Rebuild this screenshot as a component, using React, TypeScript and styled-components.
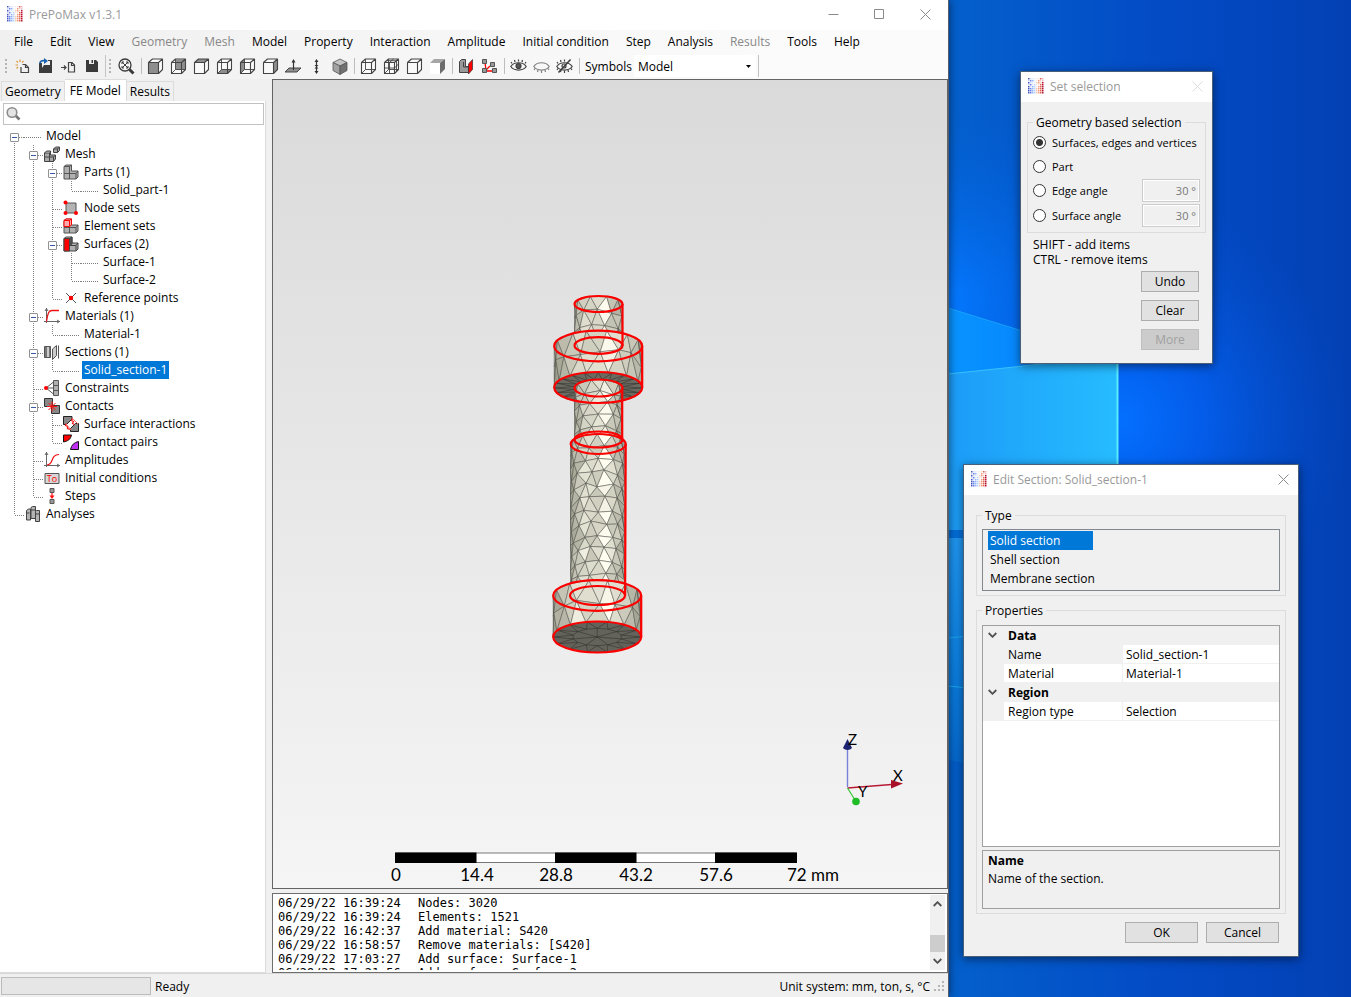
import React from 'react';
import styled, { createGlobalStyle, css } from 'styled-components';

const GlobalStyle = createGlobalStyle`
  *, *::before, *::after { box-sizing: border-box; }
  body { margin: 0; font: 12px/15px "Open Sans", "Noto Sans", sans-serif; color: #000; }
  button, input, select { font: inherit; color: inherit; margin: 0; padding: 0; border-radius: 0; }
`;

/* ---------- desktop and window frames ---------- */

const Desktop = styled.div`
  position: relative;
  min-height: 100vh;
  overflow: hidden;
  background: #0450c4;
`;

const Wallpaper = styled.svg`
  position: absolute;
  inset: 0 0 0 auto;
  width: 403px;
  height: 100%;
`;

const MainWindow = styled.main`
  position: relative;
  display: grid;
  grid-template-rows: 30px 24px 25px minmax(0, 1fr) 24px;
  width: calc(100% - 402px);
  height: 100vh;
  background: #f0f0f0;
  border-right: 1px solid #55606c;
  box-shadow: 1px 0 8px rgba(0, 0, 0, 0.45);
`;

const Dialog = styled.section<{ $top: number; $right: number; $width: number }>`
  position: absolute;
  top: ${(p) => p.$top}px;
  right: ${(p) => p.$right}px;
  width: ${(p) => p.$width}px;
  background: #f0f0f0;
  border: 1px solid #4a6078;
  box-shadow: 0 2px 9px rgba(0, 0, 0, 0.5);
`;

const TitleBar = styled.header`
  display: flex;
  align-items: center;
  gap: 6px;
  height: 30px;
  padding: 0 0 2px 7px;
  background: #fff;
  color: #999;
`;

const Title = styled.h1`
  flex: 1;
  margin: 0;
  font-size: 12px;
  font-weight: 400;
`;

const CaptionGroup = styled.div`
  display: flex;
`;

const CaptionButton = styled.button<{ $width: number }>`
  display: grid;
  place-items: center;
  width: ${(p) => p.$width}px;
  height: 28px;
  border: 0;
  background: none;
  color: #8a8a8a;
  &:disabled { color: #ddd; }
`;

/* ---------- menu and toolbar ---------- */

const MenuBar = styled.nav`
  display: flex;
  gap: 1px;
  padding: 0 0 1px 6px;
  background: linear-gradient(90deg, #f0f0f0, #fbfbfb 85%);
`;

const MenuItem = styled.button`
  padding: 0 8px;
  border: 0;
  background: none;
  white-space: nowrap;
  &:disabled { color: #888; }
`;

const Toolbar = styled.div`
  display: flex;
  align-items: center;
  padding: 0 0 1px 5px;
  background: linear-gradient(90deg, #f0f0f0, #fbfbfb 85%);
`;

const Grip = styled.span`
  width: 2px;
  height: 15px;
  margin-right: 4px;
  background: repeating-linear-gradient(#b4b4b4 0 2px, transparent 2px 4px);
`;

const StripEnd = styled.span`
  width: 1px;
  height: 22px;
  margin: 0 3px 0 2px;
  background: #c4c4c4;
`;

const Separator = styled.span`
  width: 1px;
  height: 16px;
  margin: 0 2px 0 3px;
  background: #bdbdbd;
`;

const ToolButton = styled.button`
  display: grid;
  place-items: center;
  width: 23px;
  height: 22px;
  border: 0;
  background: none;
`;

const SymbolLabel = styled.label`
  padding: 0 2px 0 3px;
`;

const SymbolSelect = styled.select`
  width: 122px;
  height: 22px;
  padding: 0 4px;
  border: 0;
  appearance: none;
  background: #fff url("data:image/svg+xml,%3Csvg xmlns='http://www.w3.org/2000/svg' width='5' height='3'%3E%3Cpath d='M0 0h5L2.5 3z'/%3E%3C/svg%3E") no-repeat right 5px center;
`;

/* ---------- work area ---------- */

const WorkArea = styled.div`
  display: grid;
  grid-template-columns: 266px minmax(0, 1fr);
  gap: 6px;
  min-height: 0;
`;

const SidePanel = styled.aside`
  display: flex;
  flex-direction: column;
`;

const Tabs = styled.div`
  display: flex;
  align-items: flex-end;
  height: 22px;
  padding-left: 1px;
`;

const Tab = styled.button<{ $active?: boolean }>`
  height: 20px;
  padding: 0 3px;
  white-space: nowrap;
  border: 1px solid #dcdcdc;
  border-bottom: 0;
  background: #f0f0f0;
  & + & { border-left: 0; }
  ${(p) => p.$active && css`
    height: 22px;
    padding: 0 5px 1px;
    background: #fff;
  `}
`;

const TabPage = styled.div`
  flex: 1;
  min-height: 0;
  padding: 2px 1px 0 3px;
  background: #fff;
  border-right: 1px solid #dcdcdc;
  border-bottom: 1px solid #dcdcdc;
`;

const SearchBox = styled.label`
  display: flex;
  align-items: center;
  gap: 4px;
  height: 22px;
  padding-left: 2px;
  border: 1px solid #c2c2c2;
`;

const SearchInput = styled.input`
  flex: 1;
  min-width: 0;
  border: 0;
  outline: 0;
  background: none;
`;

const TreeList = styled.ul`
  margin: 2px 0 0 2px;
  padding: 0;
  list-style: none;
`;

const TreeRow = styled.li`
  display: flex;
  height: 18px;
`;

const dotsV = 'repeating-linear-gradient(#808080 0 1px, transparent 1px 2px)';
const dotsH = 'repeating-linear-gradient(90deg, #808080 0 1px, transparent 1px 2px)';

const Guide = styled.span<{ $above?: boolean; $below?: boolean; $branch?: boolean }>`
  position: relative;
  display: grid;
  place-items: center;
  flex: none;
  width: 19px;
  &::before {
    content: "";
    position: absolute;
    left: 9px;
    width: 1px;
    top: ${(p) => (p.$above ? 0 : 10)}px;
    bottom: ${(p) => (p.$below ? 0 : 8)}px;
    background: ${dotsV};
  }
  &::after {
    content: "";
    display: ${(p) => (p.$branch ? 'block' : 'none')};
    position: absolute;
    left: 10px;
    right: 0;
    top: 10px;
    height: 1px;
    background: ${dotsH};
  }
`;

const HiddenGuide = styled.span`
  flex: none;
  width: 19px;
`;

const Expander = styled.button`
  position: relative;
  z-index: 1;
  display: grid;
  place-items: center;
  width: 9px;
  height: 9px;
  margin-top: 3px;
  border: 1px solid #919191;
  border-radius: 1px;
  background: #fff;
  &::before { content: ""; width: 5px; height: 1px; background: #3a58a8; }
`;

const IconSlot = styled.span<{ $empty?: boolean }>`
  flex: none;
  width: 17px;
  padding: 1px 0 0 1px;
  ${(p) => p.$empty && css`
    background: ${dotsH} 0 10px / 17px 1px no-repeat;
  `}
  svg { display: block; }
`;

const TreeLabel = styled.span<{ $selected?: boolean }>`
  margin-left: 3px;
  padding: 0 2px;
  line-height: 18px;
  white-space: nowrap;
  ${(p) => p.$selected && css`
    background: #0078d7;
    color: #fff;
  `}
`;

const RightPane = styled.div`
  display: grid;
  grid-template-rows: minmax(0, 1fr) 80px;
  gap: 4px;
  min-height: 0;
`;

const Viewport = styled.div`
  position: relative;
  overflow: hidden;
  border: 1px solid #646464;
  background: linear-gradient(#dadada, #f5f5f5);
`;

const ModelDrawing = styled.svg`
  position: absolute;
  top: 210px;
  left: calc(50% - 62px);
`;

const AxisDrawing = styled.svg`
  position: absolute;
  right: 38px;
  bottom: 76px;
`;

const ScaleDrawing = styled.svg`
  position: absolute;
  left: calc(50% - 222px);
  bottom: 0;
`;

const LogPane = styled.div`
  display: flex;
  gap: 2px;
  padding: 1px 2px 2px 5px;
  background: #fff;
  border: 1px solid #6e6e6e;
  overflow: hidden;
`;

const LogLines = styled.div`
  flex: 1;
  padding-top: 1px;
  overflow: hidden;
  font: 12px/14px "DejaVu Sans Mono", monospace;
`;

const LogLine = styled.div`
  display: grid;
  grid-template-columns: 140px 1fr;
  white-space: pre;
`;

const ScrollBar = styled.div`
  display: flex;
  flex-direction: column;
  align-items: center;
  justify-content: space-between;
  width: 15px;
  padding: 6px 0;
  background: #f0f0f0;
`;

const ScrollThumb = styled.span`
  width: 15px;
  height: 17px;
  margin-top: 22px;
  background: #cdcdcd;
`;

const StatusBar = styled.footer`
  display: flex;
  align-items: center;
  gap: 4px;
  padding: 1px 3px 0 1px;
  border-top: 1px solid #d7d7d7;
`;

const ProgressTrack = styled.div`
  width: 150px;
  height: 18px;
  border: 1px solid #bcbcbc;
  background: #e6e6e6;
`;

const StatusText = styled.span<{ $grow?: boolean }>`
  flex: ${(p) => (p.$grow ? 1 : 'none')};
  white-space: nowrap;
`;

/* ---------- dialogs ---------- */

const GroupBox = styled.fieldset`
  margin: 0;
  padding: 0 5px 4px;
  min-width: 0;
  border: 1px solid #dcdcdc;
  legend { padding: 0 3px; }
`;

const SelectionBody = styled.div`
  padding: 13px 6px 13px;
`;

const RadioGrid = styled.div`
  display: grid;
  grid-template-columns: 1fr 58px;
  grid-template-rows: 24px 24px 25px 25px;
  align-items: center;
  font-size: 11px;
`;

const RadioLabel = styled.label<{ $wide?: boolean }>`
  display: flex;
  align-items: center;
  gap: 6px;
  white-space: nowrap;
  ${(p) => p.$wide && css`grid-column: 1 / -1;`}
`;

const Radio = styled.input`
  flex: none;
  appearance: none;
  width: 13px;
  height: 13px;
  border: 1px solid #333;
  border-radius: 50%;
  background: #fff;
  &:checked { background: radial-gradient(#333 0 3px, #fff 4px); }
`;

const AngleInput = styled.input`
  width: 58px;
  height: 23px;
  padding: 0 3px 1px 0;
  border: 1px solid #ccc;
  box-shadow: inset 0 0 0 1px #fff;
  background: #f0f0f0;
  text-align: right;
  &:disabled { color: #777; }
`;

const Hint = styled.p`
  margin: 4px 0 4px 6px;
`;

const ButtonStack = styled.div`
  display: flex;
  flex-direction: column;
  align-items: flex-end;
  gap: 8px;
  padding-right: 7px;
`;

const PushButton = styled.button<{ $width: number }>`
  width: ${(p) => p.$width}px;
  height: 21px;
  border: 1px solid #adadad;
  background: #e1e1e1;
  &:disabled {
    border-color: #bfbfbf;
    background: #ccc;
    color: #a0a0a0;
  }
`;

const EditBody = styled.div`
  display: grid;
  gap: 7px;
  padding: 13px 12px;
`;

const TypeList = styled.ul`
  height: 62px;
  margin: 6px 0 0;
  padding: 1px 5px;
  border: 1px solid #828790;
  list-style: none;
`;

const TypeOption = styled.li<{ $selected?: boolean }>`
  width: 105px;
  padding: 0 2px;
  line-height: 19px;
  white-space: nowrap;
  ${(p) => p.$selected && css`
    background: #0078d7;
    color: #fff;
  `}
`;

const PropertyBox = styled.div`
  height: 222px;
  margin-top: 7px;
  border: 1px solid #a0a0a0;
  background: #fff;
`;

const PropertyTable = styled.table`
  width: 100%;
  border-spacing: 0;
  table-layout: fixed;
  td, th {
    height: 19px;
    padding: 0 4px;
    border-bottom: 1px solid #f0f0f0;
    font-weight: 400;
    line-height: 15px;
    text-align: left;
  }
  td:first-child { padding: 0 0 0 5px; background: #f0f0f0; }
  td:first-child svg { display: block; }
  td:last-child { padding-left: 3px; border-left: 1px solid #f0f0f0; }
`;

const GutterColumn = styled.col`
  width: 21px;
`;

const NameColumn = styled.col`
  width: 118px;
`;

const CategoryRow = styled.tr`
  background: #f0f0f0;
  && th { font-weight: 700; }
`;

const PropertyName = styled.th<{ $current?: boolean }>`
  background: ${(p) => (p.$current ? '#f0f0f0' : '#fff')};
`;

const PropertyInput = styled.input`
  display: block;
  width: 100%;
  height: 16px;
  border: 0;
  background: none;
`;

const Description = styled.div`
  height: 59px;
  margin-top: 3px;
  padding: 1px 5px;
  border: 1px solid #a0a0a0;
  line-height: 18px;
  p { margin: 0; }
`;

const ButtonRow = styled.div`
  display: flex;
  justify-content: flex-end;
  gap: 8px;
  padding: 1px 7px 0 0;
`;

/* ---------- drawings ---------- */

const dotColors = ['#3b4cc0', '#5d7ce6', '#8cb0fe', '#b8d0f9', '#f3c7b1', '#f39475', '#dc5e4b', '#b40426'];
const dotRows = ['10000010', '01100100', '10001101', '01010011', '10110111', '11111111', '11111111', '11111111'];

const AppIcon = () => (
  <svg width="16" height="16" viewBox="0 0 16 16" aria-hidden="true">
    {dotRows.flatMap((row, y) =>
      row.split('').map((on, x) => (
        <rect key={`${x}-${y}`} x={x * 2} y={y * 2} width="1.5" height="1.5"
          fill={dotColors[x]} opacity={on === '1' ? 0.95 : 0.28} />
      )),
    )}
  </svg>
);

const CloseGlyph = () => (
  <svg width="11" height="11" viewBox="0 0 11 11"><path d="M.5.5l10 10M10.5.5l-10 10" stroke="currentColor" fill="none" /></svg>
);

const faces: Record<string, string> = {
  front: 'M1.5 4.5h10v11h-10z',
  back: 'M5.5 1.5h10v10h-10z',
  top: 'M1.5 4.5l4-3.5h10l-4 3.5z',
  bottom: 'M1.5 15.5l4-4h10l-4 4z',
  left: 'M1.5 4.5l4-3.5v10.5l-4 4z',
  right: 'M11.5 4.5l4-3.5v10.5l-4 4z',
};

const CubeIcon = ({ face, wire, grid }: { face?: string; wire?: boolean; grid?: boolean }) => (
  <svg width="17" height="17" viewBox="0 0 17 17" fill="none" stroke="#444" strokeWidth="1.1" strokeLinejoin="round">
    <path d="M1.5 4.5l4-3.5h10v10.5l-4 4h-10z" fill="#fafafa" stroke="none" />
    {face && <path d={faces[face]} fill="#8e8e8e" stroke="none" />}
    {(wire || face === 'back' || face === 'bottom' || face === 'left') && <path d="M5.5 1v10.5h10M5.5 11.5l-4 4" strokeWidth="0.9" />}
    <path d="M1.5 4.5h10v11h-10zM1.5 4.5l4-3.5h10l-4 3.5M15.5 1v10.5l-4 4" />
    {grid && <path d="M6.5 4.5v11M1.5 10h10M10.5 1l-4 3.5M11.5 10l4-4M3.5 2.7h10v10.5" strokeWidth="0.9" />}
  </svg>
);

const NewIcon = () => (
  <svg width="16" height="16" viewBox="0 0 16 16" fill="none" stroke="#444" strokeWidth="1.2">
    <path d="M7.5 6.5h3l3 3v5H6V9" />
    <path d="M10.5 6.5v3h3" />
    <path d="M5 1.5v2.5M1.5 3l1.5 1.5M.5 7h2.5M8.5 3L7 4.5M1.5 10.5L3 9" stroke="#dc9a3c" />
  </svg>
);
const OpenIcon = () => (
  <svg width="16" height="16" viewBox="0 0 16 16">
    <path d="M1 5v10h12l1-8h-1V2h-3v1h2v4H6L4 10V5z" fill="#3c3c3c" />
    <path d="M14 2v13h-2V2z" fill="#3c3c3c" />
    <path d="M2 5.5C2 3 4 2.3 7 2.8" fill="none" stroke="#1b63ad" strokeWidth="1.8" />
    <path d="M6 0l4 3-4 3z" fill="#1b63ad" />
  </svg>
);
const ImportIcon = () => (
  <svg width="16" height="16" viewBox="0 0 16 16" fill="none" stroke="#444" strokeWidth="1.2">
    <path d="M7.5 4.5h3.5l2.5 2.5v7h-6zM10.5 4.5v3h3" />
    <path d="M0 9.5h4.5M3 7.5l2 2-2 2" />
  </svg>
);
const SaveIcon = () => (
  <svg width="16" height="16" viewBox="0 0 16 16">
    <path d="M2 2h10l2 2v10H2z" fill="#3a3a3a" />
    <path d="M5 2h5v4H5z" fill="#eee" /><path d="M7.5 2h1.5v3h-1.5z" fill="#3a3a3a" />
  </svg>
);
const ZoomIcon = () => (
  <svg width="17" height="17" viewBox="0 0 17 17" fill="none" stroke="#3a3a3a">
    <circle cx="7" cy="7" r="6" strokeWidth="1.3" fill="#f6f6f6" />
    <path d="M11.5 11.5l4 4" strokeWidth="3" />
    <path d="M4 6V4h2M8 4h2v2M10 8v2H8M6 10H4V8M4 4l6 6M10 4l-6 6" strokeWidth="1" />
  </svg>
);
const NormalIcon = () => (
  <svg width="17" height="17" viewBox="0 0 17 17">
    <path d="M4 10h12l-4 4H0z" fill="#8e8e8e" stroke="#444" />
    <path d="M8.5 12V3" stroke="#333" strokeWidth="1.2" /><path d="M8.5 1l2 3.5h-4z" fill="#333" />
  </svg>
);
const VerticalIcon = () => (
  <svg width="9" height="17" viewBox="0 0 9 17">
    <path d="M4.5 3v11" stroke="#333" strokeWidth="1.2" />
    <path d="M4.5 1l2 3h-4zM4.5 16l2-3h-4zM2.5 7h4l-2 2zM2.5 10.5h4l-2-2z" fill="#333" />
  </svg>
);
const IsoIcon = () => (
  <svg width="16" height="17" viewBox="0 0 16 17" stroke="#555" strokeWidth="0.8">
    <path d="M8 1l7 3.5L8 8 1 4.5z" fill="#c4c4c4" />
    <path d="M1 4.5L8 8v8.5L1 12.5z" fill="#a2a2a2" />
    <path d="M15 4.5L8 8v8.5l7-4z" fill="#717171" />
  </svg>
);
const ShadedIcon = () => (
  <svg width="17" height="17" viewBox="0 0 17 17">
    <path d="M1 5h10v11H1z" fill="#fff" /><path d="M1 5l4-4h11l-5 4z" fill="#a6a6a6" /><path d="M11 5l5-4v10l-5 5z" fill="#6d6d6d" />
  </svg>
);
const SectionCutIcon = () => (
  <svg width="17" height="17" viewBox="0 0 17 17" stroke="#444">
    <path d="M1.5 3.5l2-2h4v7h3v6h-9z" fill="#999" /><path d="M5.5 4v5h5l2-2" fill="none" />
    <path d="M10.5 6l4-4.5v10l-4 4.5z" fill="#f00" stroke="#333" strokeWidth="0.7" />
  </svg>
);
const AnnotateIcon = () => (
  <svg width="17" height="17" viewBox="0 0 17 17">
    <path d="M4 4l1 9h7M5 12l4-4" fill="none" stroke="#f00" strokeWidth="1.3" />
    <path d="M1.5 1.5h4v4h-4zM9.5 4.5h4v4h-4zM1.5 10.5h4v4h-4zM11.5 10.5h4v4h-4z" fill="#999" stroke="#555" />
  </svg>
);
const EyeIcon = ({ state }: { state: 'open' | 'closed' | 'toggle' }) => {
  const color = state === 'closed' ? '#808080' : '#404040';
  return (
    <svg width="17" height="16" viewBox="0 0 17 16" fill="none" stroke={color} strokeWidth="1.2">
      <path d="M.8 8.5C4 3.5 13 3.5 16.2 8.5 13 13.2 4 13.2.8 8.5z" />
      {state === 'open' && <><path d="M2 5.5l-1-1.5M5 4L4.5 2M8.5 3.5V1.5M12 4l.5-2M15 5.5l1-1.5" /><circle cx="8.5" cy="8" r="2.5" fill="#555" /></>}
      {state !== 'open' && <path d="M2 10.5L1 12M5 12l-.5 2M8.5 12.5V15M12 12l.5 2M15 10.5l1 1.5" />}
      {state === 'toggle' && <><path d="M2 5.5l-1-1.5M5 4L4.5 2M8.5 3.5V1.5" /><circle cx="8" cy="8" r="2" /><path d="M2.5 14.5l12-13" strokeWidth="1.6" /></>}
    </svg>
  );
};

const SearchGlyph = () => (
  <svg width="16" height="16" viewBox="0 0 16 16" fill="none">
    <path d="M9 9l4.5 4.5" stroke="#777" strokeWidth="2.6" />
    <circle cx="6" cy="6.5" r="4.8" fill="#e4e4e4" stroke="#8c8c8c" strokeWidth="1.6" />
  </svg>
);

const partShape = 'M1 2.5l2-1.5h5.5v6h6.5v6l-2 2H1z';

const TreeIcon = ({ name }: { name: string }) => {
  const art: Record<string, React.ReactNode> = {
    mesh: <g stroke="#444" fill="#aaa"><path d="M.5 7l2-2h4v4h5v4l-2 2.5h-9zM.5 11h9v4.5M5.5 7v8.5M.5 7h5l1.5-2M9.5 11l2-2" /><path d="M9.5 3l2-2h4v3.5l-2 2h-4zM9.5 3h4v3.5M13.5 3l2-2" /></g>,
    part: <g stroke="#555" fill="#b0b0b0"><path d={partShape} /><path d="M1 9.5h12V15M6.5 2.5V15M1 2.5h5.5l2-1.5M13 9.5l2-2.5" fill="none" /></g>,
    node: <g><path d="M3 3h10v10H3z" fill="#b4b4b4" stroke="#555" /><g fill="#f00"><circle cx="2.5" cy="2.5" r="2" /><circle cx="2.5" cy="13" r="2" /><circle cx="13" cy="13" r="2" /></g></g>,
    element: <g stroke="#555" fill="#b0b0b0"><path d={partShape} /><path d="M6.5 9V15M1 9.5h12V15M13 9.5l2-2.5" fill="none" /><path d="M1 2.5l2-1.5h5.5v6l-2 1.5H1zM1 2.5h5.5v6M6.5 2.5l2-1.5" fill="#faa" stroke="#f00" /></g>,
    surface: <g stroke="#444" fill="#b0b0b0"><path d="M1 2.5l2-1.5h6v6h6v6l-2 2H1z" /><path d="M7 9.5h6V15M13 9.5l2-2.5" fill="none" /><path d="M6.5 2.5l2.5-1.5v7l-2.5 1.5z" fill="#555" /><path d="M1 2.5h5.5v12.5H1z" fill="#f00" /></g>,
    point: <g><path d="M3 3l10 10M13 3L3 13" stroke="#555" /><circle cx="8" cy="8" r="2.2" fill="#f00" /></g>,
    material: <g fill="none"><path d="M2.5 0v15M0 13.5h16M1 3l1.5-2.5L4 3M13 12l2.5 1.5L13 15" stroke="#666" /><path d="M2.5 13.5C4 4 5 2.5 8 2.5h7" stroke="#e11" strokeWidth="1.3" /></g>,
    section: <g stroke="#555"><path d="M.5 2.5h6v11h-6z" fill="#777" /><path d="M3 3h2v10H3z" fill="#ccc" stroke="none" /><path d="M8.5 5l4-3.5v10l-4 4z" fill="#ccc" /><path d="M14.5 1.5v13" /></g>,
    constraint: <g stroke="#555"><path d="M9.5.5h5v15h-5zM9.5 5.5h5M9.5 10.5h5" fill="#b0b0b0" /><path d="M2 8h7.5M2 8l7.5-6M2 8l7.5 6" fill="none" /><circle cx="2" cy="8" r="2" fill="#f00" stroke="none" /></g>,
    contact: <g><path d="M.5.5h8v8h-8z" fill="#888" stroke="#333" /><path d="M7.5 7.5h8v8h-8z" fill="#888" stroke="#333" /><path d="M8 3.5v10M3 8.5h10M4.5 5l7 7M11.5 5l-7 7" stroke="#f11" strokeWidth="1" /></g>,
    interaction: <g><path d="M.5.5H9v2.500L3.500 8.500h-3zM15.500 15.500H7.500v-3l5-5h3z" fill="#888" stroke="#222" /><path d="M9.5 2.5l-1 2 2 1-1 2 2 1M3.5 7.5l-1 2 2 1v2l3 1" fill="none" stroke="#f11" strokeWidth="1.2" /><path d="M9.5 2.5l5.5 5.5M3 8l5 6" stroke="#f66" /></g>,
    pair: <g stroke="#111"><path d="M.5 1h8c-1 4.5-3.5 6-8 7z" fill="#f00" /><path d="M15.5 7.5v8h-8c1-4.5 3.5-7 8-8z" fill="#c030f0" /></g>,
    amplitude: <g fill="none"><path d="M2.5 0v15M0 13.5h16M1 3l1.5-2.5L4 3M13 12l2.5 1.5L13 15" stroke="#666" /><path d="M3 13c7 0 3-10.5 12-10.5" stroke="#e11" strokeWidth="1.2" /></g>,
    initial: <g><path d="M1 3.5h14v10H1z" fill="#d6d6d6" stroke="#555" /><text x="8" y="12" fill="#f00" fontSize="9" textAnchor="middle">To</text></g>,
    step: <g><path d="M6 .5h4v4H6zM6 11.5h4v4H6z" fill="#999" stroke="#555" /><path d="M8 5v5" stroke="#f11" strokeWidth="1.2" /><path d="M5.5 7.5h5L8 11z" fill="#f11" /></g>,
    analysis: <g stroke="#444" fill="#b4b4b4"><path d="M1.5 4.5l2-1.5h2v11h-4z" /><path d="M6 1.5l1.5-1h3v12H6z" /><path d="M10.5 5.5l1-1h3v11h-4zM6 4h4M1.5 7h3M10.5 8h4" /></g>,
  };
  return <svg width="16" height="16" viewBox="0 0 16 16">{art[name]}</svg>;
};

/* Pseudo-random sequence, so that the mesh is the same on every render. */
const makeRandom = (seed: number) => () => {
  seed = (seed * 16807) % 2147483647;
  return seed / 2147483647;
};

const tone = (v: number) => {
  const k = Math.max(0, Math.min(1, v));
  return `rgb(${Math.round(145 + 110 * k)},${Math.round(145 + 109 * k)},${Math.round(128 + 112 * k)})`;
};

type Barrel = { cx: number; rx: number; ry: number; y0: number; y1: number; cols: number; rows: number; seed: number };

/* Front half of a cylinder that is seen from below, as shaded triangles. */
const BarrelMesh = ({ cx, rx, ry, y0, y1, cols, rows, seed }: Barrel) => {
  const rnd = makeRandom(seed);
  const step = (y1 - y0) / rows;
  const lines = Array.from({ length: rows + 1 }, (_, j) => {
    const stops = j % 2 ? [0, ...Array.from({ length: cols }, (_, i) => i + 0.5), cols] : Array.from({ length: cols + 1 }, (_, i) => i);
    return stops.map((s, i) => {
      const inner = i > 0 && i < stops.length - 1;
      const t = (Math.PI * (s + (inner ? (rnd() - 0.5) * 0.3 : 0))) / cols;
      const dy = inner && j > 0 && j < rows ? (rnd() - 0.5) * step * 0.4 : 0;
      return { t, x: cx - rx * Math.cos(t), y: y0 + j * step + dy - ry * Math.sin(t) };
    });
  });
  const triangles: React.ReactNode[] = [];
  for (let j = 0; j < rows; j++) {
    const a = lines[j];
    const b = lines[j + 1];
    let p = 0;
    let q = 0;
    while (p < a.length - 1 || q < b.length - 1) {
      const useA = q >= b.length - 1 || (p < a.length - 1 && a[p + 1].t < b[q + 1].t);
      const tri = useA ? [a[p], a[p + 1], b[q]] : [a[p], b[q + 1], b[q]];
      const t = (tri[0].t + tri[1].t + tri[2].t) / 3;
      const glint = Math.exp(-Math.pow((t - 1.85) / 0.22, 2)) * 0.45 + Math.exp(-Math.pow((t - 1.1) / 0.18, 2)) * 0.25;
      const v = 0.1 + 0.48 * Math.sin(t) + glint + (rnd() - 0.5) * 0.26;
      triangles.push(<polygon key={`${j}-${p}-${q}`} points={tri.map((c) => `${c.x.toFixed(1)},${c.y.toFixed(1)}`).join(' ')} fill={tone(v)} />);
      if (useA) p++;
      else q++;
    }
  }
  return <g stroke="#4c4c46" strokeWidth="0.5" strokeLinejoin="round">{triangles}</g>;
};

/* Flat underside of a disc, with spokes joining its rings. */
const DiscMesh = ({ cx, cy, rx, ry, spokes }: { cx: number; cy: number; rx: number; ry: number; spokes?: boolean }) => {
  const n = spokes ? 20 : 14;
  const at = (i: number, r: number) => `${(cx + rx * r * Math.cos((i * 2 * Math.PI) / n)).toFixed(1)} ${(cy + ry * r * Math.sin((i * 2 * Math.PI) / n)).toFixed(1)}`;
  const idx = Array.from({ length: n }, (_, i) => i);
  return (
    <g stroke="#32322e" strokeWidth="0.6" fill="none">
      <ellipse cx={cx} cy={cy} rx={rx} ry={ry} fill={spokes ? '#6c6b62' : '#64635b'} />
      <path d={idx.map((i) => `M${at(i, 1)}L${at(i + 0.5, 0.56)}L${at(i + 1, 1)}`).join('')} />
      {!spokes && <path d={idx.map((i) => `M${at(i + 0.5, 0.56)}L${at(i + 1.5, 0.56)}`).join('')} />}
      {!spokes && <path d={idx.filter((i) => i % 2 === 0).map((i) => `M${at(i + 0.5, 0.56)}L${cx} ${cy}`).join('')} />}
    </g>
  );
};

const BoltModel = () => (
  <ModelDrawing width="100" height="370" viewBox="548 290 100 370" role="img" aria-label="Meshed bolt">
    <ellipse cx="598.5" cy="304" rx="24" ry="8" fill="#d0cfba" />
    <BarrelMesh cx={598.5} rx={24} ry={8} y0={304} y1={346} cols={5} rows={3} seed={71} />
    <BarrelMesh cx={598.2} rx={44} ry={15.5} y0={346} y1={388} cols={7} rows={2} seed={912} />
    <DiscMesh cx={598.2} cy={388} rx={44} ry={15.5} spokes />
    <BarrelMesh cx={598.5} rx={24} ry={8.5} y0={388} y1={446} cols={5} rows={5} seed={331} />
    <BarrelMesh cx={598} rx={27.5} ry={10} y0={444} y1={596} cols={6} rows={12} seed={4471} />
    <BarrelMesh cx={597.2} rx={44} ry={15.3} y0={595.5} y1={637} cols={7} rows={2} seed={8123} />
    <DiscMesh cx={597.2} cy={637} rx={44} ry={15.5} />
    <g fill="none" stroke="#fc0000" strokeWidth="2.2">
      <ellipse cx="598.5" cy="304" rx="24" ry="8" />
      <ellipse cx="598.5" cy="345.5" rx="24" ry="8.3" />
      <ellipse cx="598.2" cy="346" rx="44" ry="15.3" />
      <ellipse cx="598.2" cy="387.5" rx="44" ry="15.5" />
      <ellipse cx="598.5" cy="388" rx="24" ry="8.5" />
      <ellipse cx="598.5" cy="439.5" rx="24" ry="8" />
      <ellipse cx="598.2" cy="444" rx="27.5" ry="10" />
      <ellipse cx="597.5" cy="595.5" rx="27.5" ry="9.5" />
      <ellipse cx="597.2" cy="595.5" rx="44" ry="15.3" />
      <ellipse cx="597.2" cy="637" rx="44" ry="15.5" />
      <path d="M622.5 304v42M642.2 346v42M622.2 388v52M625.7 444l-.6 152M641.2 595.5V637" />
    </g>
  </ModelDrawing>
);

const Axes = () => (
  <AxisDrawing width="68" height="80" viewBox="841 732 68 80" fontFamily="Lato, sans-serif" fontSize="15">
    <path d="M847.5 787V747" stroke="#7880d8" strokeWidth="1.4" />
    <path d="M847.5 739l4.5 9c-2 2.5-7 2.5-9 0z" fill="#1c2370" />
    <path d="M847.5 788l44-3.5" stroke="#b81a34" strokeWidth="1.3" />
    <path d="M891 780l12 3.5-12 5z" fill="#a80f28" />
    <path d="M847.5 788l7.5 12" stroke="#38c838" strokeWidth="1.3" />
    <circle cx="856" cy="801.5" r="3.8" fill="#1fbd25" />
    <text x="848" y="745">Z</text><text x="893" y="781">X</text><text x="858" y="797">Y</text>
  </AxisDrawing>
);

const ScaleBar = () => (
  <ScaleDrawing width="460" height="40" viewBox="388 848 460 40" fontFamily="Lato, sans-serif" fontSize="17">
    <path d="M395.5 853h401v9.5h-401z" fill="#fff" stroke="#777" />
    <path d="M395 852.5h81.5v10.5H395zM555 852.5h81.5v10.5H555zM715 852.5h82v10.5h-82z" />
    {([['0', 396], ['14.4', 477], ['28.8', 556], ['43.2', 636], ['57.6', 716], ['72 mm', 813]] as [string, number][]).map(([label, x]) => (
      <text key={label} x={x} y="881" textAnchor="middle">{label}</text>
    ))}
  </ScaleDrawing>
);

const DesktopArt = () => (
  <Wallpaper viewBox="948 0 403 997" preserveAspectRatio="none" aria-hidden="true">
    <defs>
      <linearGradient id="base" x1="0" x2="1"><stop offset="0" stopColor="#0460cc" /><stop offset="0.5" stopColor="#034cc6" /><stop offset="1" stopColor="#0340b4" /></linearGradient>
      <radialGradient id="glow" gradientUnits="userSpaceOnUse" cx="1120" cy="420" r="230"><stop offset="0" stopColor="#0470ff" /><stop offset="0.35" stopColor="#0462f4" stopOpacity="0.8" /><stop offset="1" stopColor="#0450d0" stopOpacity="0" /></radialGradient>
      <radialGradient id="left" gradientUnits="userSpaceOnUse" cx="948" cy="300" r="190"><stop offset="0" stopColor="#0478ff" /><stop offset="1" stopColor="#0460e0" stopOpacity="0" /></radialGradient>
      <linearGradient id="beam" x1="0" x2="1"><stop offset="0" stopColor="#0894ff" /><stop offset="1" stopColor="#0478fc" /></linearGradient>
      <linearGradient id="pane" x1="0" x2="1"><stop offset="0" stopColor="#1c9cf8" /><stop offset="1" stopColor="#26bcff" /></linearGradient>
      <linearGradient id="lower" x1="0" x2="0" y1="0" y2="1"><stop offset="0" stopColor="#2098f4" /><stop offset="0.5" stopColor="#0d82e4" /><stop offset="1" stopColor="#0464cc" /></linearGradient>
    </defs>
    <path d="M948 0h403v997H948z" fill="url(#base)" />
    <path d="M948 0h403v997H948z" fill="url(#glow)" />
    <path d="M948 0h403v997H948z" fill="url(#left)" />
    <path d="M948 308l170 54v14H948z" fill="url(#beam)" />
    <path d="M948 308l100 31" stroke="#18a4ff" />
    <path d="M948 374l170-18v174H948z" fill="url(#pane)" />
    <path d="M948 374l170-18" stroke="#3cc0fc" fill="none" />
    <path d="M1117.5 356v174" stroke="#58ecff" strokeWidth="2" />
    <path d="M948 530h170v8H948z" fill="#0470dc" />
    <path d="M948 538h170v250l-170-28z" fill="url(#lower)" />
    <path d="M948 638l30-3M948 686l30 3" stroke="#1cacf4" />
  </Wallpaper>
);

const Chevron = ({ up }: { up?: boolean }) => (
  <svg width="9" height="6" viewBox="0 0 9 6"><path d={up ? 'M.7 5l3.8-3.8L8.3 5' : 'M.7 1l3.8 3.8L8.3 1'} fill="none" stroke="#505050" strokeWidth="1.8" /></svg>
);

/* ---------- content ---------- */

type Node = { label: string; icon?: string; selected?: boolean; children?: Node[] };

const tree: Node[] = [
  {
    label: 'Model',
    children: [
      {
        label: 'Mesh', icon: 'mesh', children: [
          { label: 'Parts (1)', icon: 'part', children: [{ label: 'Solid_part-1' }] },
          { label: 'Node sets', icon: 'node' },
          { label: 'Element sets', icon: 'element' },
          { label: 'Surfaces (2)', icon: 'surface', children: [{ label: 'Surface-1' }, { label: 'Surface-2' }] },
          { label: 'Reference points', icon: 'point' },
        ],
      },
      { label: 'Materials (1)', icon: 'material', children: [{ label: 'Material-1' }] },
      { label: 'Sections (1)', icon: 'section', children: [{ label: 'Solid_section-1', selected: true }] },
      { label: 'Constraints', icon: 'constraint' },
      { label: 'Contacts', icon: 'contact', children: [{ label: 'Surface interactions', icon: 'interaction' }, { label: 'Contact pairs', icon: 'pair' }] },
      { label: 'Amplitudes', icon: 'amplitude' },
      { label: 'Initial conditions', icon: 'initial' },
      { label: 'Steps', icon: 'step' },
    ],
  },
  { label: 'Analyses', icon: 'analysis' },
];

const renderNodes = (nodes: Node[], guides: boolean[] = []): React.ReactNode[] =>
  nodes.flatMap((node, i) => {
    const more = i < nodes.length - 1;
    return [
      <TreeRow key={`${guides.length}-${node.label}`} role="treeitem" aria-selected={!!node.selected}>
        {guides.map((g, k) => (g ? <Guide key={k} $above $below /> : <HiddenGuide key={k} />))}
        <Guide $above={guides.length > 0 || i > 0} $below={more} $branch>
          {node.children && <Expander aria-label={`Collapse ${node.label}`} />}
        </Guide>
        <IconSlot $empty={!node.icon}>{node.icon && <TreeIcon name={node.icon} />}</IconSlot>
        <TreeLabel $selected={node.selected}>{node.label}</TreeLabel>
      </TreeRow>,
      ...(node.children ? renderNodes(node.children, [...guides, more]) : []),
    ];
  });

const menu = ['File', 'Edit', 'View', 'Geometry', 'Mesh', 'Model', 'Property', 'Interaction', 'Amplitude', 'Initial condition', 'Step', 'Analysis', 'Results', 'Tools', 'Help'];
const disabledMenu = ['Geometry', 'Mesh', 'Results'];

const tools: [string, React.ReactNode][][] = [
  [['Zoom to fit', <ZoomIcon />]],
  [
    ['Front view', <CubeIcon face="front" />], ['Back view', <CubeIcon face="back" />], ['Top view', <CubeIcon face="top" />],
    ['Bottom view', <CubeIcon face="bottom" />], ['Left view', <CubeIcon face="left" />], ['Right view', <CubeIcon face="right" />],
    ['Normal view', <NormalIcon />], ['Vertical view', <VerticalIcon />], ['Isometric view', <IsoIcon />],
  ],
  [['Wireframe', <CubeIcon wire />], ['Element edges', <CubeIcon wire grid />], ['Model edges', <CubeIcon />], ['No edges', <ShadedIcon />]],
  [['Section view', <SectionCutIcon />], ['Exploded view', <AnnotateIcon />]],
  [['Show all', <EyeIcon state="open" />], ['Hide all', <EyeIcon state="closed" />], ['Invert visibility', <EyeIcon state="toggle" />]],
];

const log = [
  ['06/29/22 16:39:24', 'Nodes: 3020'],
  ['06/29/22 16:39:24', 'Elements: 1521'],
  ['06/29/22 16:42:37', 'Add material: S420'],
  ['06/29/22 16:58:57', 'Remove materials: [S420]'],
  ['06/29/22 17:03:27', 'Add surface: Surface-1'],
  ['06/29/22 17:21:56', 'Add surface: Surface-2'],
];

export default function App() {
  return (
    <Desktop>
      <GlobalStyle />
      <DesktopArt />

      <MainWindow>
        <TitleBar>
          <AppIcon />
          <Title>PrePoMax v1.3.1</Title>
          <CaptionGroup>
            <CaptionButton $width={46} aria-label="Minimize"><svg width="11" height="11"><path d="M.5 5.5h10" stroke="currentColor" /></svg></CaptionButton>
            <CaptionButton $width={46} aria-label="Maximize"><svg width="11" height="11"><path d="M.5.5h9v9h-9z" fill="none" stroke="currentColor" /></svg></CaptionButton>
            <CaptionButton $width={46} aria-label="Close"><CloseGlyph /></CaptionButton>
          </CaptionGroup>
        </TitleBar>

        <MenuBar>
          {menu.map((m) => <MenuItem key={m} disabled={disabledMenu.includes(m)}>{m}</MenuItem>)}
        </MenuBar>

        <Toolbar>
          <Grip />
          <ToolButton aria-label="New"><NewIcon /></ToolButton>
          <ToolButton aria-label="Open"><OpenIcon /></ToolButton>
          <ToolButton aria-label="Import"><ImportIcon /></ToolButton>
          <ToolButton aria-label="Save"><SaveIcon /></ToolButton>
          <StripEnd />
          <Grip />
          {tools.map((group, i) => (
            <React.Fragment key={i}>
              {group.map(([name, icon]) => <ToolButton key={name} aria-label={name}>{icon}</ToolButton>)}
              <Separator />
            </React.Fragment>
          ))}
          <SymbolLabel htmlFor="symbols">Symbols</SymbolLabel>
          <SymbolSelect id="symbols" defaultValue="Model"><option>Model</option></SymbolSelect>
          <StripEnd />
        </Toolbar>

        <WorkArea>
          <SidePanel>
            <Tabs role="tablist">
              <Tab role="tab">Geometry</Tab>
              <Tab role="tab" $active aria-selected>FE Model</Tab>
              <Tab role="tab">Results</Tab>
            </Tabs>
            <TabPage>
              <SearchBox><SearchGlyph /><SearchInput type="text" aria-label="Search" /></SearchBox>
              <TreeList role="tree">{renderNodes(tree)}</TreeList>
            </TabPage>
          </SidePanel>

          <RightPane>
            <Viewport>
              <BoltModel />
              <Axes />
              <ScaleBar />
            </Viewport>
            <LogPane>
              <LogLines role="log">
                {log.map(([time, text], i) => <LogLine key={i}><span>{time}</span><span>{text}</span></LogLine>)}
              </LogLines>
              <ScrollBar><Chevron up /><ScrollThumb /><Chevron /></ScrollBar>
            </LogPane>
          </RightPane>
        </WorkArea>

        <StatusBar>
          <ProgressTrack />
          <StatusText $grow>Ready</StatusText>
          <StatusText>Unit system: mm, ton, s, °C</StatusText>
          <svg width="11" height="11" viewBox="0 0 11 11" aria-hidden="true">
            <path d="M8 0h2v2H8zM4 4h2v2H4zM8 4h2v2H8zM0 8h2v2H0zM4 8h2v2H4zM8 8h2v2H8z" fill="#b5b5b5" />
          </svg>
        </StatusBar>
      </MainWindow>

      <Dialog $top={71} $right={138} $width={193}>
        <TitleBar>
          <AppIcon />
          <Title>Set selection</Title>
          <CaptionButton $width={30} disabled aria-label="Close"><CloseGlyph /></CaptionButton>
        </TitleBar>
        <SelectionBody>
          <GroupBox>
            <legend>Geometry based selection</legend>
            <RadioGrid>
              <RadioLabel $wide><Radio type="radio" name="mode" defaultChecked />Surfaces, edges and vertices</RadioLabel>
              <RadioLabel $wide><Radio type="radio" name="mode" />Part</RadioLabel>
              <RadioLabel><Radio type="radio" name="mode" />Edge angle</RadioLabel>
              <AngleInput disabled aria-label="Edge angle value" defaultValue="30 °" />
              <RadioLabel><Radio type="radio" name="mode" />Surface angle</RadioLabel>
              <AngleInput disabled aria-label="Surface angle value" defaultValue="30 °" />
            </RadioGrid>
          </GroupBox>
          <Hint>SHIFT - add items<br />CTRL - remove items</Hint>
          <ButtonStack>
            <PushButton $width={58}>Undo</PushButton>
            <PushButton $width={58}>Clear</PushButton>
            <PushButton $width={58} disabled>More</PushButton>
          </ButtonStack>
        </SelectionBody>
      </Dialog>

      <Dialog $top={464} $right={52} $width={336}>
        <TitleBar>
          <AppIcon />
          <Title>Edit Section: Solid_section-1</Title>
          <CaptionButton $width={30} aria-label="Close"><CloseGlyph /></CaptionButton>
        </TitleBar>
        <EditBody>
          <GroupBox>
            <legend>Type</legend>
            <TypeList role="listbox" aria-label="Type">
              <TypeOption role="option" aria-selected $selected>Solid section</TypeOption>
              <TypeOption role="option">Shell section</TypeOption>
              <TypeOption role="option">Membrane section</TypeOption>
            </TypeList>
          </GroupBox>
          <GroupBox>
            <legend>Properties</legend>
            <PropertyBox>
              <PropertyTable>
                <colgroup><GutterColumn /><NameColumn /><col /></colgroup>
                <tbody>
                  <CategoryRow><td><Chevron /></td><th colSpan={2}>Data</th></CategoryRow>
                  <tr><td /><PropertyName $current>Name</PropertyName><td><PropertyInput aria-label="Name" defaultValue="Solid_section-1" /></td></tr>
                  <tr><td /><PropertyName>Material</PropertyName><td>Material-1</td></tr>
                  <CategoryRow><td><Chevron /></td><th colSpan={2}>Region</th></CategoryRow>
                  <tr><td /><PropertyName>Region type</PropertyName><td>Selection</td></tr>
                </tbody>
              </PropertyTable>
            </PropertyBox>
            <Description><p><strong>Name</strong></p><p>Name of the section.</p></Description>
          </GroupBox>
          <ButtonRow>
            <PushButton $width={73}>OK</PushButton>
            <PushButton $width={73}>Cancel</PushButton>
          </ButtonRow>
        </EditBody>
      </Dialog>
    </Desktop>
  );
}
